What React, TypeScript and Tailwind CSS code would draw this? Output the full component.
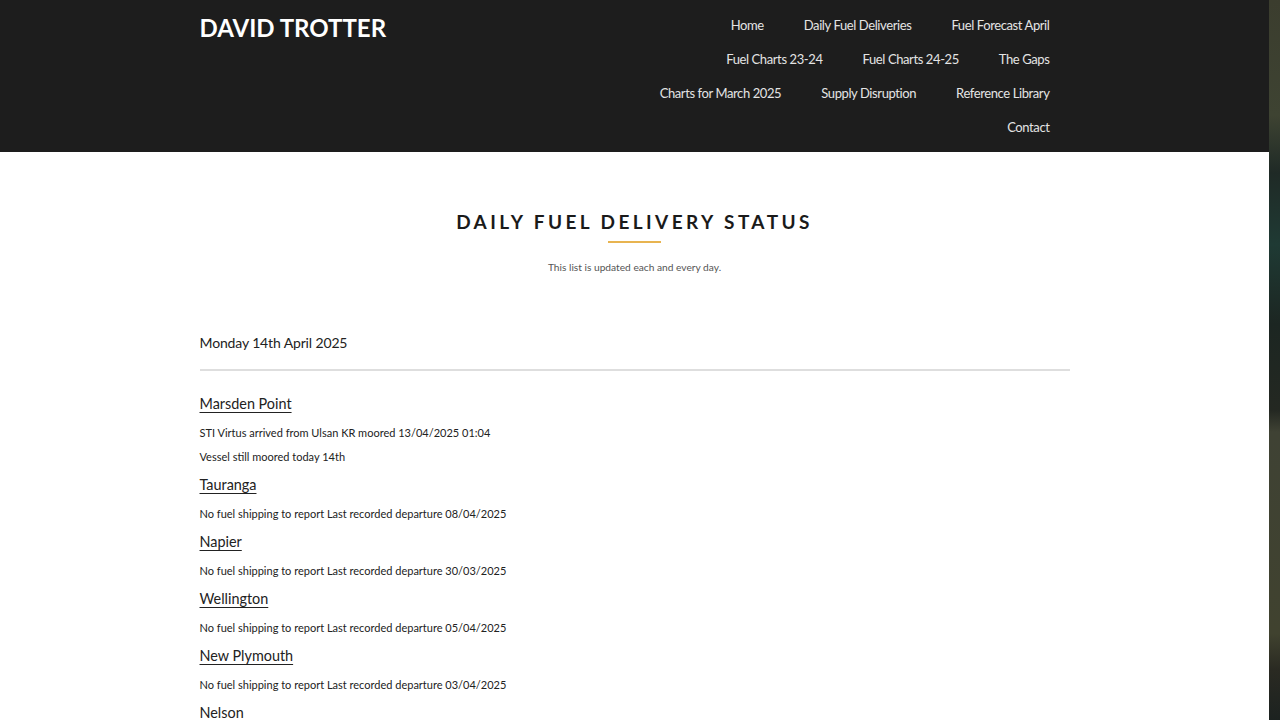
const navRows = [
  ['Home', 'Daily Fuel Deliveries', 'Fuel Forecast April'],
  ['Fuel Charts 23-24', 'Fuel Charts 24-25', 'The Gaps'],
  ['Charts for March 2025', 'Supply Disruption', 'Reference Library'],
  ['Contact'],
]

const ports = [
  {
    name: 'Marsden Point',
    lines: ['STI Virtus arrived from Ulsan KR moored 13/04/2025 01:04', 'Vessel still moored today 14th'],
  },
  { name: 'Tauranga', lines: ['No fuel shipping to report Last recorded departure 08/04/2025'] },
  { name: 'Napier', lines: ['No fuel shipping to report Last recorded departure 30/03/2025'] },
  { name: 'Wellington', lines: ['No fuel shipping to report Last recorded departure 05/04/2025'] },
  { name: 'New Plymouth', lines: ['No fuel shipping to report Last recorded departure 03/04/2025'] },
  { name: 'Nelson', lines: ['No fuel shipping to report Last recorded departure 02/04/2025'] },
]

export default function App() {
  return (
    <div className="flex h-[720px] overflow-hidden bg-white font-['Lato','Open_Sans',sans-serif]">
      <div className="w-[1269px] shrink-0">
        <header className="h-[152px] bg-[#1d1d1d]">
          <div className="mx-auto flex w-[870px] justify-between">
            <a href="#" className="pt-[12px] text-[24px] font-bold leading-[32px] text-white">
              DAVID TROTTER
            </a>
            <nav className="pt-[7px]">
              {navRows.map((row, i) => (
                <ul key={i} className="flex h-[34px] items-center justify-end">
                  {row.map(item => (
                    <li key={item}>
                      <a href="#" className="px-5 text-[13px] tracking-[-0.4px] text-[#e4e4e4]">
                        {item}
                      </a>
                    </li>
                  ))}
                </ul>
              ))}
            </nav>
          </div>
        </header>

        <main className="mx-auto w-[870px]">
          <div className="pt-[58px] text-center">
            <h1 className="text-[19px] font-bold leading-[24px] tracking-[0.18em] text-[#1a1a1a]">
              DAILY FUEL DELIVERY STATUS
            </h1>
            <div className="mx-auto mt-[7px] h-[2px] w-[53px] bg-[#e8b450]" />
            <p className="mt-[17px] text-[10.2px] text-[#555]">This list is updated each and every day.</p>
          </div>

          <p className="mt-[57px] text-[14px] tracking-[-0.01em] text-[#222]">Monday 14th April 2025</p>
          <hr className="mt-[16px] border-t-2 border-[#dedede]" />

          <div className="mt-[21px]">
            {ports.map(port => (
              <section key={port.name} className="mb-[4px]">
                <h2 className="text-[14.4px] leading-[24px] text-[#222] underline underline-offset-[3px]">
                  {port.name}
                </h2>
                <div className="mt-[5px]">
                  {port.lines.map(line => (
                    <p key={line} className="text-[11px] leading-[24px] text-[#222]">
                      {line}
                    </p>
                  ))}
                </div>
              </section>
            ))}
          </div>
        </main>
      </div>
      <div className="flex-1 bg-[linear-gradient(to_bottom,#3b3d2e_0%,#3e4332_16%,#1f2a26_24%,#1f3a34_34%,#1c2622_45%,#242822_57%,#3f4234_60%,#40422f_88%,#2a2a22_93%,#1c2220_100%)]" />
    </div>
  )
}
